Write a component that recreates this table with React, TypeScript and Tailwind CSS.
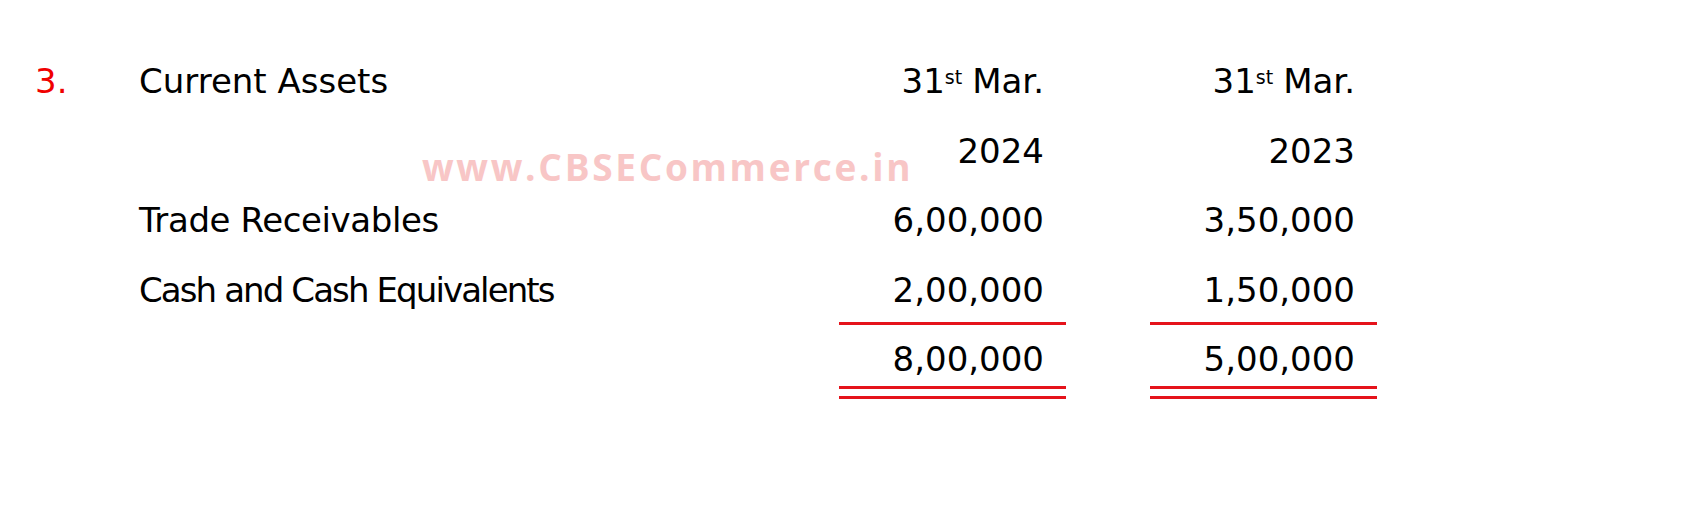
// Current Assets note – balance sheet schedule
const RED = 'bg-[#e5131b]';

type Row = {
  no?: string;
  label?: string;
  labelClass?: string;
  a: React.ReactNode;
  b: React.ReactNode;
  line?: 'single' | 'double';
};

function Ordinal({ day, suffix, month }: { day: string; suffix: string; month: string }) {
  return (
    <span>
      {day}
      <sup className="text-[19px] relative -top-[9px] align-baseline mr-[10px]">{suffix}</sup>
      {month}
    </span>
  );
}

export default function App() {
  const rows: Row[] = [
    {
      no: '3.',
      label: 'Current Assets',
      a: <Ordinal day="31" suffix="st" month="Mar." />,
      b: <Ordinal day="31" suffix="st" month="Mar." />,
    },
    { a: '2024', b: '2023' },
    { label: 'Trade Receivables', labelClass: 'tracking-[-0.4px]', a: '6,00,000', b: '3,50,000' },
    {
      label: 'Cash and Cash Equivalents',
      labelClass: 'tracking-[-1.9px]',
      a: '2,00,000',
      b: '1,50,000',
      line: 'single',
    },
    { a: '8,00,000', b: '5,00,000', line: 'double' },
  ];

  return (
    <div className="relative w-[1682px] h-[520px] bg-white text-black overflow-hidden font-['DejaVu_Sans',sans-serif] text-[34px]">
      <div className="pt-[47px] pl-[35px]">
        {rows.map((row, i) => (
          <div key={i} className="flex leading-[69.5px]">
            <div className="w-[104px] h-[69.5px] text-[#f00000]">{row.no}</div>
            <div className={`w-[700px] h-[69.5px] whitespace-nowrap ${row.labelClass || ''}`}>
              {row.label}
            </div>
            <Cell line={row.line}>{row.a}</Cell>
            <div className="w-[84px]" />
            <Cell line={row.line}>{row.b}</Cell>
          </div>
        ))}
      </div>

      {/* watermark */}
      <div className="absolute left-[422px] top-[147px] font-['Open_Sans',sans-serif] font-bold text-[37px] leading-[40px] tracking-[2.7px] text-[#f8c6c6] whitespace-nowrap pointer-events-none">
        www.CBSECommerce.in
      </div>
    </div>
  );
}

function Cell({ children, line }: { children: React.ReactNode; line?: 'single' | 'double' }) {
  if (line === 'double') {
    return (
      <div className="w-[227px]">
        <div className="h-[64px] box-border border-b-[3px] border-[#e5131b] pr-[22px] text-right whitespace-nowrap">
          {children}
        </div>
        <div className={`mt-[7px] h-[3px] ${RED}`} />
      </div>
    );
  }
  return (
    <div
      className={`w-[227px] h-[69.5px] box-border pr-[22px] text-right whitespace-nowrap ${
        line === 'single' ? 'border-b-[3px] border-[#e5131b]' : ''
      }`}
    >
      {children}
    </div>
  );
}
